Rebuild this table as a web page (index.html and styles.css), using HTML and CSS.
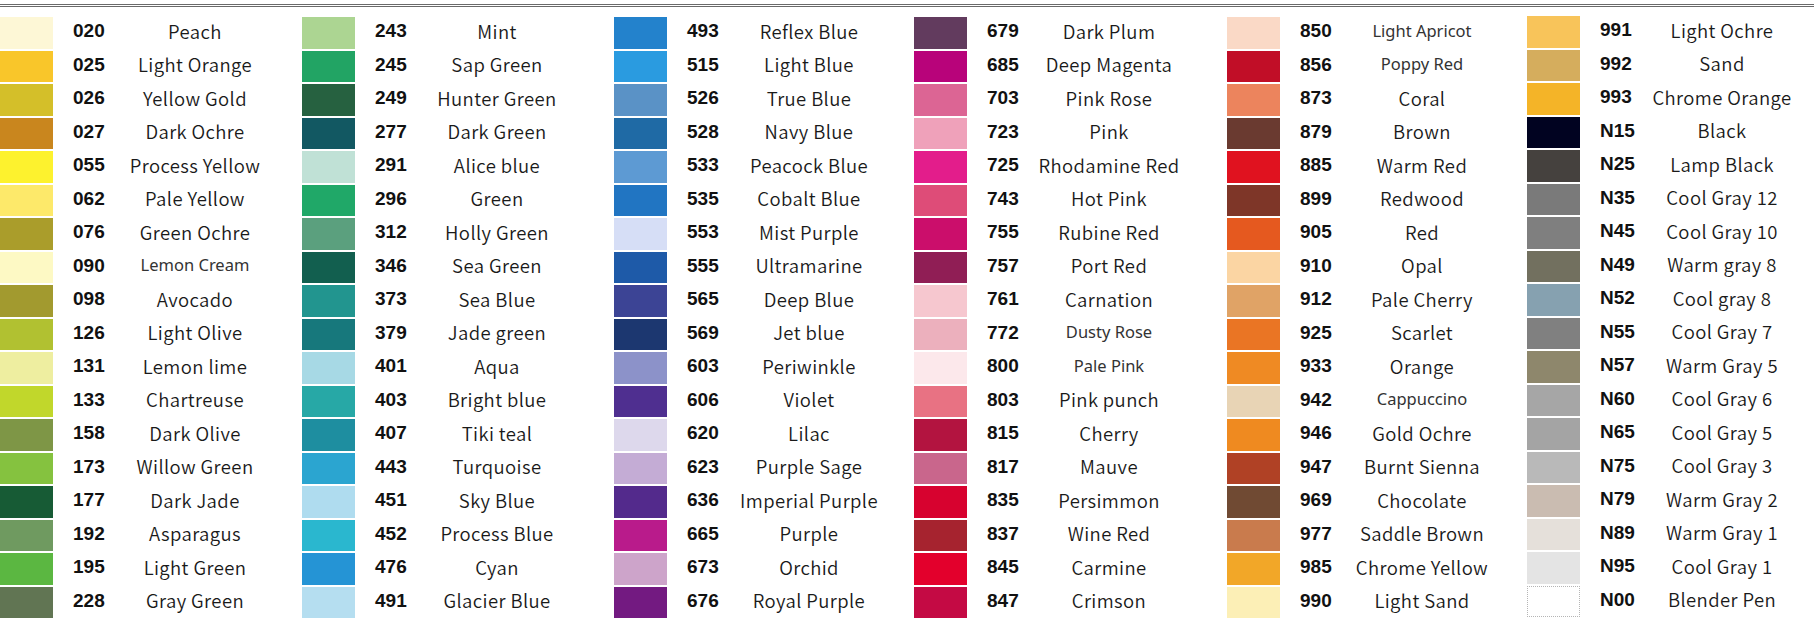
FILE: index.html
```html
<!DOCTYPE html>
<html lang="en">
<head>
<meta charset="utf-8">
<title>Marker Colour Chart</title>
<link rel="stylesheet" href="styles.css">
</head>
<body>
<div class="rule"></div>
<div class="chart">
  <div class="col">
    <div class="row"><span class="sw" style="background:#fdf7d6"></span><span class="code">020</span><span class="name">Peach</span></div>
    <div class="row"><span class="sw" style="background:#f9c62a"></span><span class="code">025</span><span class="name">Light Orange</span></div>
    <div class="row"><span class="sw" style="background:#d4bf29"></span><span class="code">026</span><span class="name">Yellow Gold</span></div>
    <div class="row"><span class="sw" style="background:#c9861e"></span><span class="code">027</span><span class="name">Dark Ochre</span></div>
    <div class="row"><span class="sw" style="background:#fdf22e"></span><span class="code">055</span><span class="name">Process Yellow</span></div>
    <div class="row"><span class="sw" style="background:#fde96a"></span><span class="code">062</span><span class="name">Pale Yellow</span></div>
    <div class="row"><span class="sw" style="background:#aa9d2b"></span><span class="code">076</span><span class="name">Green Ochre</span></div>
    <div class="row"><span class="sw" style="background:#fdf9c4"></span><span class="code">090</span><span class="name alt">Lemon Cream</span></div>
    <div class="row"><span class="sw" style="background:#a29a2f"></span><span class="code">098</span><span class="name">Avocado</span></div>
    <div class="row"><span class="sw" style="background:#b1c131"></span><span class="code">126</span><span class="name">Light Olive</span></div>
    <div class="row"><span class="sw" style="background:#eeeea0"></span><span class="code">131</span><span class="name">Lemon lime</span></div>
    <div class="row"><span class="sw" style="background:#c1d72b"></span><span class="code">133</span><span class="name">Chartreuse</span></div>
    <div class="row"><span class="sw" style="background:#7e9646"></span><span class="code">158</span><span class="name">Dark Olive</span></div>
    <div class="row"><span class="sw" style="background:#85c23f"></span><span class="code">173</span><span class="name">Willow Green</span></div>
    <div class="row"><span class="sw" style="background:#175b35"></span><span class="code">177</span><span class="name">Dark Jade</span></div>
    <div class="row"><span class="sw" style="background:#6f9a60"></span><span class="code">192</span><span class="name">Asparagus</span></div>
    <div class="row"><span class="sw" style="background:#5bb741"></span><span class="code">195</span><span class="name">Light Green</span></div>
    <div class="row"><span class="sw" style="background:#617553"></span><span class="code">228</span><span class="name">Gray Green</span></div>
  </div>
  <div class="col">
    <div class="row"><span class="sw" style="background:#acd592"></span><span class="code">243</span><span class="name">Mint</span></div>
    <div class="row"><span class="sw" style="background:#22a464"></span><span class="code">245</span><span class="name">Sap Green</span></div>
    <div class="row"><span class="sw" style="background:#266140"></span><span class="code">249</span><span class="name">Hunter Green</span></div>
    <div class="row"><span class="sw" style="background:#125862"></span><span class="code">277</span><span class="name">Dark Green</span></div>
    <div class="row"><span class="sw" style="background:#c0e1d6"></span><span class="code">291</span><span class="name">Alice blue</span></div>
    <div class="row"><span class="sw" style="background:#20a868"></span><span class="code">296</span><span class="name">Green</span></div>
    <div class="row"><span class="sw" style="background:#5ba07e"></span><span class="code">312</span><span class="name">Holly Green</span></div>
    <div class="row"><span class="sw" style="background:#125f4f"></span><span class="code">346</span><span class="name">Sea Green</span></div>
    <div class="row"><span class="sw" style="background:#22958f"></span><span class="code">373</span><span class="name">Sea Blue</span></div>
    <div class="row"><span class="sw" style="background:#17787c"></span><span class="code">379</span><span class="name">Jade green</span></div>
    <div class="row"><span class="sw" style="background:#a7d9e5"></span><span class="code">401</span><span class="name">Aqua</span></div>
    <div class="row"><span class="sw" style="background:#27a8a6"></span><span class="code">403</span><span class="name">Bright blue</span></div>
    <div class="row"><span class="sw" style="background:#1e8ea0"></span><span class="code">407</span><span class="name">Tiki teal</span></div>
    <div class="row"><span class="sw" style="background:#2ba5d0"></span><span class="code">443</span><span class="name">Turquoise</span></div>
    <div class="row"><span class="sw" style="background:#afdcef"></span><span class="code">451</span><span class="name">Sky Blue</span></div>
    <div class="row"><span class="sw" style="background:#2ab7cf"></span><span class="code">452</span><span class="name">Process Blue</span></div>
    <div class="row"><span class="sw" style="background:#2594d5"></span><span class="code">476</span><span class="name">Cyan</span></div>
    <div class="row"><span class="sw" style="background:#b5def0"></span><span class="code">491</span><span class="name">Glacier Blue</span></div>
  </div>
  <div class="col">
    <div class="row"><span class="sw" style="background:#2382cc"></span><span class="code">493</span><span class="name">Reflex Blue</span></div>
    <div class="row"><span class="sw" style="background:#2a9be0"></span><span class="code">515</span><span class="name">Light Blue</span></div>
    <div class="row"><span class="sw" style="background:#5a92c6"></span><span class="code">526</span><span class="name">True Blue</span></div>
    <div class="row"><span class="sw" style="background:#1f6aa5"></span><span class="code">528</span><span class="name">Navy Blue</span></div>
    <div class="row"><span class="sw" style="background:#5d9ad3"></span><span class="code">533</span><span class="name">Peacock Blue</span></div>
    <div class="row"><span class="sw" style="background:#2175c2"></span><span class="code">535</span><span class="name">Cobalt Blue</span></div>
    <div class="row"><span class="sw" style="background:#d6def6"></span><span class="code">553</span><span class="name">Mist Purple</span></div>
    <div class="row"><span class="sw" style="background:#1e5aa8"></span><span class="code">555</span><span class="name">Ultramarine</span></div>
    <div class="row"><span class="sw" style="background:#3c4495"></span><span class="code">565</span><span class="name">Deep Blue</span></div>
    <div class="row"><span class="sw" style="background:#1c3770"></span><span class="code">569</span><span class="name">Jet blue</span></div>
    <div class="row"><span class="sw" style="background:#8c92c9"></span><span class="code">603</span><span class="name">Periwinkle</span></div>
    <div class="row"><span class="sw" style="background:#4f2f90"></span><span class="code">606</span><span class="name">Violet</span></div>
    <div class="row"><span class="sw" style="background:#ddd8ec"></span><span class="code">620</span><span class="name">Lilac</span></div>
    <div class="row"><span class="sw" style="background:#c4acd5"></span><span class="code">623</span><span class="name">Purple Sage</span></div>
    <div class="row"><span class="sw" style="background:#532a8c"></span><span class="code">636</span><span class="name">Imperial Purple</span></div>
    <div class="row"><span class="sw" style="background:#b91b8b"></span><span class="code">665</span><span class="name">Purple</span></div>
    <div class="row"><span class="sw" style="background:#cda4ca"></span><span class="code">673</span><span class="name">Orchid</span></div>
    <div class="row"><span class="sw" style="background:#731a81"></span><span class="code">676</span><span class="name">Royal Purple</span></div>
  </div>
  <div class="col">
    <div class="row"><span class="sw" style="background:#623b5e"></span><span class="code">679</span><span class="name">Dark Plum</span></div>
    <div class="row"><span class="sw" style="background:#b8037a"></span><span class="code">685</span><span class="name">Deep Magenta</span></div>
    <div class="row"><span class="sw" style="background:#dc6594"></span><span class="code">703</span><span class="name">Pink Rose</span></div>
    <div class="row"><span class="sw" style="background:#efa1ba"></span><span class="code">723</span><span class="name">Pink</span></div>
    <div class="row"><span class="sw" style="background:#e31d8b"></span><span class="code">725</span><span class="name">Rhodamine Red</span></div>
    <div class="row"><span class="sw" style="background:#de4c78"></span><span class="code">743</span><span class="name">Hot Pink</span></div>
    <div class="row"><span class="sw" style="background:#cb0e6b"></span><span class="code">755</span><span class="name">Rubine Red</span></div>
    <div class="row"><span class="sw" style="background:#901e55"></span><span class="code">757</span><span class="name">Port Red</span></div>
    <div class="row"><span class="sw" style="background:#f6c7cf"></span><span class="code">761</span><span class="name">Carnation</span></div>
    <div class="row"><span class="sw" style="background:#ecb0bd"></span><span class="code">772</span><span class="name alt">Dusty Rose</span></div>
    <div class="row"><span class="sw" style="background:#fce8eb"></span><span class="code">800</span><span class="name alt">Pale Pink</span></div>
    <div class="row"><span class="sw" style="background:#e87283"></span><span class="code">803</span><span class="name">Pink punch</span></div>
    <div class="row"><span class="sw" style="background:#b31440"></span><span class="code">815</span><span class="name">Cherry</span></div>
    <div class="row"><span class="sw" style="background:#c9668c"></span><span class="code">817</span><span class="name">Mauve</span></div>
    <div class="row"><span class="sw" style="background:#d7022f"></span><span class="code">835</span><span class="name">Persimmon</span></div>
    <div class="row"><span class="sw" style="background:#a6232f"></span><span class="code">837</span><span class="name">Wine Red</span></div>
    <div class="row"><span class="sw" style="background:#e3002c"></span><span class="code">845</span><span class="name">Carmine</span></div>
    <div class="row"><span class="sw" style="background:#c40a44"></span><span class="code">847</span><span class="name">Crimson</span></div>
  </div>
  <div class="col">
    <div class="row"><span class="sw" style="background:#fad9c6"></span><span class="code">850</span><span class="name alt">Light Apricot</span></div>
    <div class="row"><span class="sw" style="background:#c10e27"></span><span class="code">856</span><span class="name alt">Poppy Red</span></div>
    <div class="row"><span class="sw" style="background:#ec845d"></span><span class="code">873</span><span class="name">Coral</span></div>
    <div class="row"><span class="sw" style="background:#6a3a30"></span><span class="code">879</span><span class="name">Brown</span></div>
    <div class="row"><span class="sw" style="background:#e0121f"></span><span class="code">885</span><span class="name">Warm Red</span></div>
    <div class="row"><span class="sw" style="background:#7e3628"></span><span class="code">899</span><span class="name">Redwood</span></div>
    <div class="row"><span class="sw" style="background:#e5591f"></span><span class="code">905</span><span class="name">Red</span></div>
    <div class="row"><span class="sw" style="background:#fbd5a3"></span><span class="code">910</span><span class="name">Opal</span></div>
    <div class="row"><span class="sw" style="background:#e0a366"></span><span class="code">912</span><span class="name">Pale Cherry</span></div>
    <div class="row"><span class="sw" style="background:#ea7524"></span><span class="code">925</span><span class="name">Scarlet</span></div>
    <div class="row"><span class="sw" style="background:#ef8a23"></span><span class="code">933</span><span class="name">Orange</span></div>
    <div class="row"><span class="sw" style="background:#e8d4b5"></span><span class="code">942</span><span class="name alt">Cappuccino</span></div>
    <div class="row"><span class="sw" style="background:#ef8a20"></span><span class="code">946</span><span class="name">Gold Ochre</span></div>
    <div class="row"><span class="sw" style="background:#b04125"></span><span class="code">947</span><span class="name">Burnt Sienna</span></div>
    <div class="row"><span class="sw" style="background:#704a33"></span><span class="code">969</span><span class="name">Chocolate</span></div>
    <div class="row"><span class="sw" style="background:#c97b4d"></span><span class="code">977</span><span class="name">Saddle Brown</span></div>
    <div class="row"><span class="sw" style="background:#f2a728"></span><span class="code">985</span><span class="name">Chrome Yellow</span></div>
    <div class="row"><span class="sw" style="background:#fcefb6"></span><span class="code">990</span><span class="name">Light Sand</span></div>
  </div>
  <div class="col last">
    <div class="row"><span class="sw" style="background:#f8c45a"></span><span class="code">991</span><span class="name">Light Ochre</span></div>
    <div class="row"><span class="sw" style="background:#d5ad5d"></span><span class="code">992</span><span class="name">Sand</span></div>
    <div class="row"><span class="sw" style="background:#f4b428"></span><span class="code">993</span><span class="name">Chrome Orange</span></div>
    <div class="row"><span class="sw" style="background:#010321"></span><span class="code">N15</span><span class="name">Black</span></div>
    <div class="row"><span class="sw" style="background:#45413e"></span><span class="code">N25</span><span class="name">Lamp Black</span></div>
    <div class="row"><span class="sw" style="background:#7a7a7a"></span><span class="code">N35</span><span class="name">Cool Gray 12</span></div>
    <div class="row"><span class="sw" style="background:#7f7f7f"></span><span class="code">N45</span><span class="name">Cool Gray 10</span></div>
    <div class="row"><span class="sw" style="background:#72705f"></span><span class="code">N49</span><span class="name">Warm gray 8</span></div>
    <div class="row"><span class="sw" style="background:#86a1b0"></span><span class="code">N52</span><span class="name">Cool gray 8</span></div>
    <div class="row"><span class="sw" style="background:#808080"></span><span class="code">N55</span><span class="name">Cool Gray 7</span></div>
    <div class="row"><span class="sw" style="background:#8e876c"></span><span class="code">N57</span><span class="name">Warm Gray 5</span></div>
    <div class="row"><span class="sw" style="background:#a6a6a6"></span><span class="code">N60</span><span class="name">Cool Gray 6</span></div>
    <div class="row"><span class="sw" style="background:#a4a4a4"></span><span class="code">N65</span><span class="name">Cool Gray 5</span></div>
    <div class="row"><span class="sw" style="background:#b9b9b9"></span><span class="code">N75</span><span class="name">Cool Gray 3</span></div>
    <div class="row"><span class="sw" style="background:#cabcb1"></span><span class="code">N79</span><span class="name">Warm Gray 2</span></div>
    <div class="row"><span class="sw" style="background:#e5e0da"></span><span class="code">N89</span><span class="name">Warm Gray 1</span></div>
    <div class="row"><span class="sw" style="background:#e4e4e4"></span><span class="code">N95</span><span class="name">Cool Gray 1</span></div>
    <div class="row"><span class="sw blank"></span><span class="code">N00</span><span class="name">Blender Pen</span></div>
  </div>
</div>
</body>
</html>
```
FILE: styles.css
```css
html, body {
  margin: 0;
  padding: 0;
  background: #ffffff;
}

body {
  width: 1814px;
  height: 621px;
  overflow: hidden;
  color: #1a1a1a;
  font-family: "Noto Sans CJK JP", "Noto Sans", sans-serif;
}

.rule {
  margin-top: 4px;
  height: 0;
  border-top: 3px double #6a6a6a;
}

.chart {
  display: grid;
  grid-template-columns: 302px 312px 300px 313px 300px 1fr;
  padding-top: 9px;
}

.col {
  display: flex;
  flex-direction: column;
}

.col.last {
  margin-top: -1px;
}

.row {
  display: flex;
  align-items: center;
  height: 33.5px;
}

.sw {
  flex: none;
  width: 53px;
  height: 31.5px;
}

.sw.blank {
  box-sizing: border-box;
  background: #ffffff;
  border: 1px dotted #b5b5b5;
}

.code {
  flex: none;
  width: 42px;
  margin-left: 20px;
  padding-bottom: 4px;
  font-family: "Liberation Sans", Arial, sans-serif;
  font-weight: 700;
  font-size: 19px;
  line-height: 1;
  color: #111;
}

.name {
  flex: none;
  width: 160px;
  padding-bottom: 4px;
  text-align: center;
  font-size: 18.5px;
  font-weight: 350;
  line-height: 1.2;
  letter-spacing: 0.4px;
  white-space: nowrap;
  color: #1a1a1a;
}

.name.alt {
  font-family: "Noto Sans", "Open Sans", sans-serif;
  font-weight: normal;
  font-size: 16.5px;
  letter-spacing: 0;
  color: #333;
}
```
